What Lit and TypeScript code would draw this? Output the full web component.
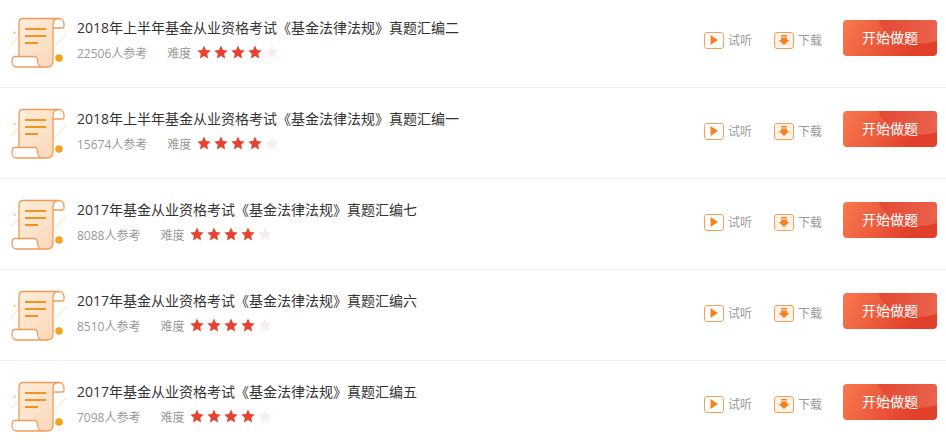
import { LitElement, html, css } from "lit";
import { customElement } from "lit/decorators.js";

const rows = [
  { t: "2018年上半年基金从业资格考试《基金法律法规》真题汇编二", n: "22506人参考" },
  { t: "2018年上半年基金从业资格考试《基金法律法规》真题汇编一", n: "15674人参考" },
  { t: "2017年基金从业资格考试《基金法律法规》真题汇编七", n: "8088人参考" },
  { t: "2017年基金从业资格考试《基金法律法规》真题汇编六", n: "8510人参考" },
  { t: "2017年基金从业资格考试《基金法律法规》真题汇编五", n: "7098人参考" },
];

const star = (on: boolean) => html`<svg class="star" width="14" height="14" viewBox="0 0 14 14"><path d="M7 .6l2 4.3 4.7.6-3.5 3.2.9 4.7L7 11.1l-4.1 2.3.9-4.7L.3 5.5 5 4.9z" fill=${on ? "#e5432f" : "#f6eeee"}></path></svg>`;

const scroll = html`<svg class="scroll" width="58" height="56" viewBox="0 0 58 56" fill="none">
  <defs><linearGradient id="bodyFill" x1="0" y1="0" x2="1" y2="1"><stop offset="0" stop-color="#feeedd"/><stop offset="1" stop-color="#fbd6b6"/></linearGradient></defs>
  <path d="M1 31L8 23" stroke="#fbdcae" stroke-width="1"/>
  <path d="M45 32L56 20" stroke="#fbe0b5" stroke-width="1"/>
  <path d="M3.500 18l2 1.500" stroke="#f5bd5a" stroke-width="1.500"/>
  <path d="M9 42V9c0-3 1.500-4.500 4-4.500h34c-3 0-4 3-4 6V47c0 4-2 6-6 6H33c-3 0-5-3-5-6V42z" fill="url(#bodyFill)"/>
  <path d="M9 42V9c0-3 1.500-4.500 4-4.500h36c3 0 5 2.500 5 6 0 3 0 3.500-1.500 3.500H43" stroke="#ef9c5a" stroke-width="1.300"/>
  <path d="M49 4.500c-4 0-6 2.500-6 6V47c0 4-2 6-6 6h-4" stroke="#ef9c5a" stroke-width="1.300"/>
  <path d="M4.500 42.500H25c2 0 2.500 1 2.500 4 0 3.500 2 6.500 5.500 6.500H7c-3 0-5-2-5-5 0-3 .5-5.500 2.500-5.500z" fill="#fff" stroke="#ef9c5a" stroke-width="1.300"/>
  <path d="M15 15h21M15 22h21M15 29h13" stroke="#f4931e" stroke-width="2"/>
  <circle cx="49" cy="44" r="3.800" fill="#f6a21f"/>
</svg>`;

@customElement("app-root")
export class AppRoot extends LitElement {
  static styles = css`
    :host { display: block; width: 946px; height: 440px; overflow: hidden; background: #fff;
      font-family: "Open Sans", "Noto Sans CJK SC", sans-serif; }
    .list { margin-top: -3px; }
    .row { height: 90px; border-bottom: 1px solid #f0f0f0; display: flex; align-items: center; padding: 0 9px 0 10px; }
    .scroll { flex: none; margin-right: 9px; }
    .info { flex: 1; min-width: 0; display: flex; flex-direction: column; gap: 7px; margin-bottom: 4px; }
    .title { font-size: 14px; line-height: 20px; color: #333; }
    .meta { display: flex; align-items: center; font-size: 12px; line-height: 18px; color: #999; }
    .diff { margin-left: 20px; margin-right: 6px; }
    .stars { display: flex; gap: 3px; margin-bottom: 3px; }
    .star { display: block; }
    .act { display: flex; align-items: center; gap: 4px; font-size: 12px; color: #999; margin-bottom: 4px; }
    .listen { margin-right: 22px; }
    .down { margin-right: 21px; }
    .ico { width: 20px; height: 17px; box-sizing: border-box; border: 1.300px solid #f5a05a; border-radius: 3px; display: flex; align-items: center; justify-content: center; background: #fff; }
    .down .ico { background: #fff3e8; }
    .btn { width: 94px; height: 36px; margin-bottom: 8px; padding-bottom: 2px; box-sizing: border-box; border-radius: 4px; color: #fff; font-size: 14px; display: flex; align-items: center; justify-content: center; position: relative; overflow: hidden; background: linear-gradient(115deg, #f8794f, #e2402a 75%); }
    .btn::before { content: ""; position: absolute; left: 34px; top: -40px; width: 84px; height: 64px; border-radius: 50%; background: linear-gradient(100deg, #e2452f, #ee6d58); }
    .btn span { position: relative; }
  `;
  render() {
    return html`<div class="list">${rows.map((r) => html`
      <div class="row">
        ${scroll}
        <div class="info">
          <div class="title">${r.t}</div>
          <div class="meta"><span>${r.n}</span><span class="diff">难度</span>
            <span class="stars">${[1, 1, 1, 1, 0].map((v) => star(!!v))}</span></div>
        </div>
        <div class="act listen"><span class="ico"><svg width="10" height="10" viewBox="0 0 10 10"><path d="M1.500 0L9 5 1.500 10z" fill="#f58220"/></svg></span>试听</div>
        <div class="act down"><span class="ico"><svg width="12" height="10" viewBox="0 0 12 10"><path d="M3 0h6v1.500H3zM3 2.500h6V5h2.500L6 10 .5 5H3z" fill="#f58220"/></svg></span>下载</div>
        <div class="btn"><span>开始做题</span></div>
      </div>`)}</div>`;
  }
}
